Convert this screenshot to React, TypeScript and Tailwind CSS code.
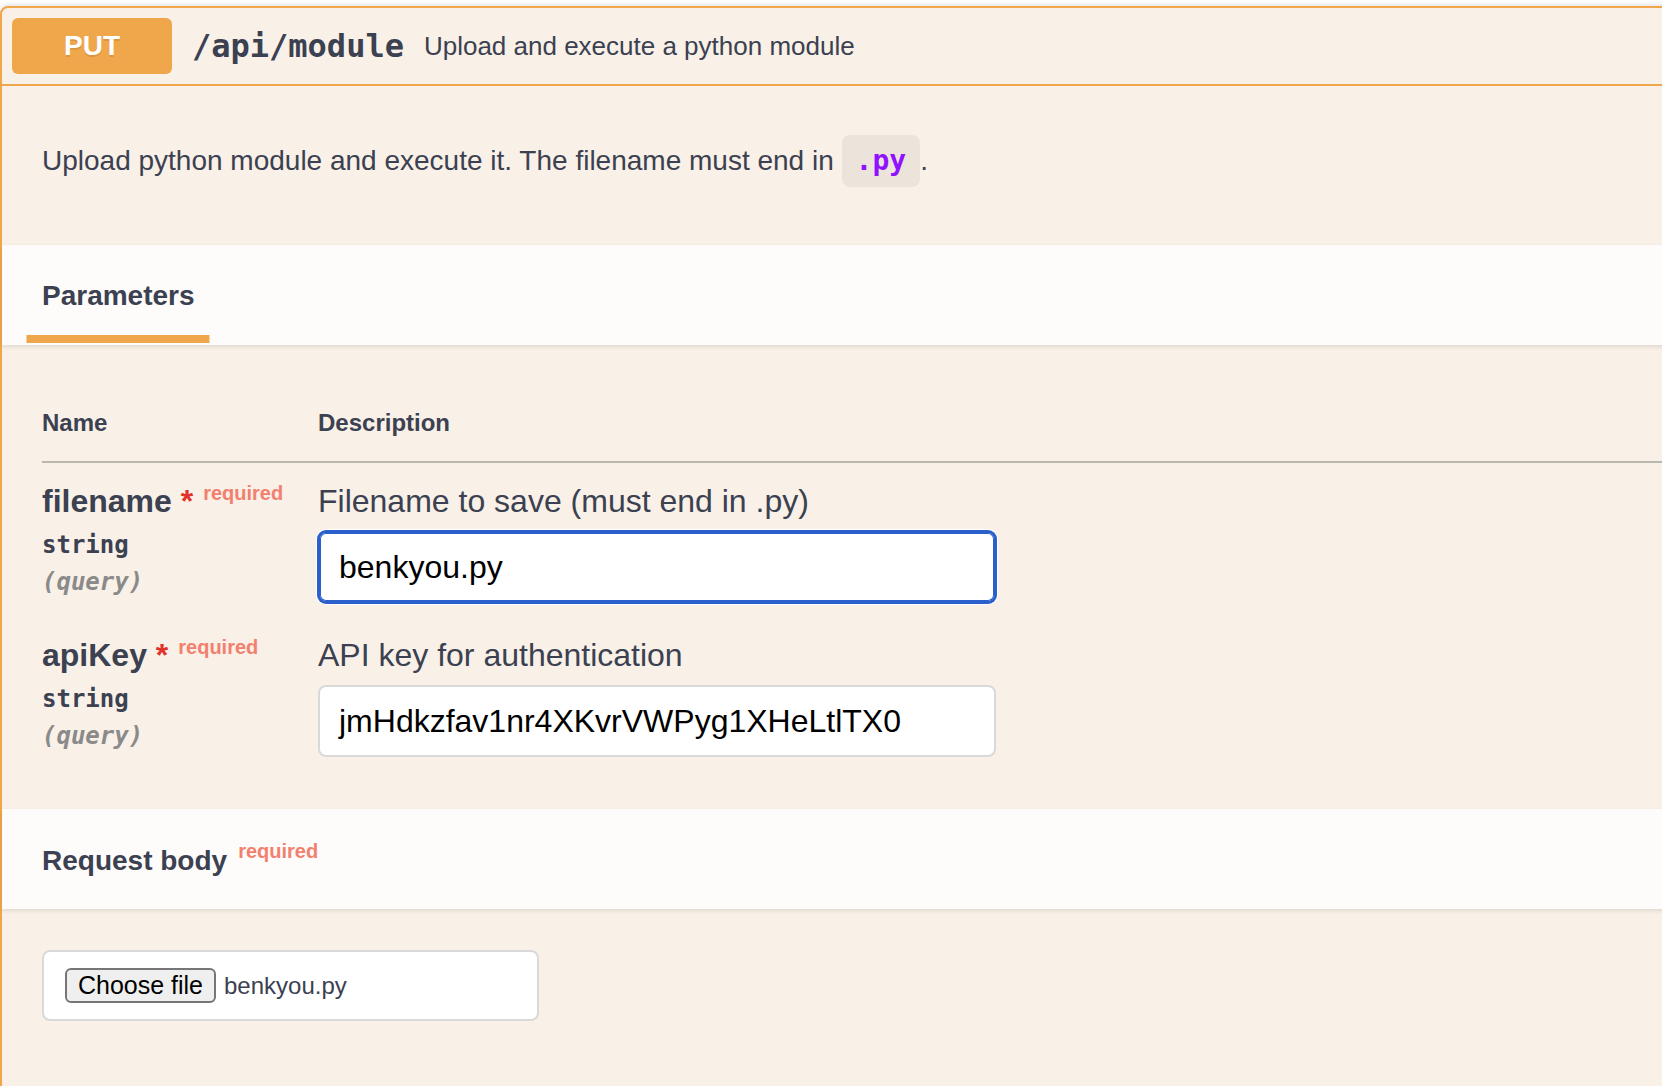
import React from "react";

const sans = "font-['Liberation_Sans',Arial,sans-serif]";
const mono = "font-['DejaVu_Sans_Mono',monospace]";

function ParamRow({
  name,
  desc,
  value,
  focused,
}: {
  name: string;
  desc: string;
  value: string;
  focused?: boolean;
}) {
  return (
    <div className="flex pt-[20px]">
      <div className="w-[276px] shrink-0">
        <div className="text-[32px] leading-[37px] font-bold text-[#3b4151] whitespace-nowrap">
          {name}
          <span className="text-[#e0322a]"> *</span>
          <span className="relative top-[-12px] px-[10px] text-[20px] font-bold text-[#f2806f]">required</span>
        </div>
        <div className={`${mono} pt-[7px] pb-[9px] text-[24px] leading-[28px] font-bold text-[#3b4151]`}>string</div>
        <div className={`${mono} text-[24px] leading-[28px] font-bold italic text-[#8a8a8a]`}>(query)</div>
      </div>
      <div className="flex-1">
        <p className="text-[32px] leading-[37px] text-[#3b4151]">{desc}</p>
        <div
          className={
            focused
              ? "mt-[11px] mb-[14px] w-[678px] h-[72px] rounded-[8px] bg-white border-2 border-[#2b5fcc] shadow-[0_0_0_1px_#2b5fcc,0_0_0_2px_#ffffff,inset_0_0_0_1px_#2b5fcc] flex items-center px-[19px] text-[32px] text-black"
              : "mt-[11px] mb-[14px] w-[678px] h-[72px] rounded-[8px] bg-white border-2 border-[#d9d9d9] flex items-center px-[19px] text-[32px] text-black"
          }
        >
          {value}
        </div>
      </div>
    </div>
  );
}

export default function App() {
  return (
    <div className={`${sans} w-[1662px] h-[1086px] overflow-hidden bg-white`}>
      <div className="mt-[6px] w-[1720px] rounded-[8px] border-2 border-[#f0a64b] bg-[#f9f0e7] shadow-[0_0_6px_rgba(0,0,0,0.19)]">
        {/* Summary */}
        <div className="flex items-center p-[10px] border-b-2 border-[#f0a64b]">
          <div className="w-[160px] h-[56px] rounded-[6px] bg-[#f0a64b] flex items-center justify-center text-white text-[28px] font-bold [text-shadow:0_2px_0_rgba(0,0,0,0.1)]">
            PUT
          </div>
          <div className={`${mono} px-[20px] text-[32px] font-bold text-[#3b4151] leading-[40px]`}>/api/module</div>
          <div className="text-[26px] text-[#3b4151]">Upload and execute a python module</div>
        </div>

        {/* Description */}
        <div className="px-[40px] pt-[49px] pb-[58px]">
          <p className="text-[28px] leading-[52px] text-[#3b4151]">
            Upload python module and execute it. The filename must end in{" "}
            <code
              className={`${mono} inline-block align-top h-[52px] leading-[52px] px-[14px] rounded-[8px] bg-[#ece4db] text-[28px] font-bold text-[#9012fe]`}
            >
              .py
            </code>
            .
          </p>
        </div>

        {/* Parameters header */}
        <div className="relative z-10 h-[100px] px-[40px] flex items-center bg-[#fefcfa] shadow-[0_2px_4px_rgba(0,0,0,0.1)]">
          <h4 className="pt-[2px] text-[28px] font-bold text-[#3b4151]">
            <span className="relative inline-block leading-[32px]">
              Parameters
              <span className="absolute left-1/2 -translate-x-1/2 bottom-[-31px] w-[120%] h-[8px] bg-[#f0a64b]" />
            </span>
          </h4>
        </div>

        {/* Parameters table */}
        <div className="px-[40px] pt-[40px] pb-[38px]">
          <div className="flex border-b-2 border-[#bab6b0] py-[24px] text-[24px] leading-[28px] font-bold text-[#3b4151]">
            <div className="w-[276px] shrink-0">Name</div>
            <div className="flex-1">Description</div>
          </div>
          <ParamRow name="filename" desc="Filename to save (must end in .py)" value="benkyou.py" focused />
          <ParamRow name="apiKey" desc="API key for authentication" value="jmHdkzfav1nr4XKvrVWPyg1XHeLtlTX0" />
        </div>

        {/* Request body header */}
        <div className="relative z-10 h-[100px] px-[40px] pt-[6px] flex items-center bg-[#fefcfa] shadow-[0_2px_4px_rgba(0,0,0,0.1)]">
          <h4 className="text-[28px] leading-[32px] font-bold text-[#3b4151] whitespace-nowrap">
            Request body
            <span className="relative top-[-12px] ml-[11px] text-[20px] font-bold text-[#f2806f]">required</span>
          </h4>
        </div>

        {/* Request body content */}
        <div className="px-[40px] pt-[41px] pb-[80px]">
          <div className="w-[497px] h-[71px] rounded-[8px] border-2 border-[#d9d9d9] bg-white flex items-center pl-[21px]">
            <div className="w-[151px] h-[35px] rounded-[6px] border-2 border-[#767676] bg-[#efefef] flex items-center justify-center text-[25px] text-black">
              Choose file
            </div>
            <span className="ml-[8px] text-[24px] text-[#3b4151]">benkyou.py</span>
          </div>
        </div>
      </div>
    </div>
  );
}
